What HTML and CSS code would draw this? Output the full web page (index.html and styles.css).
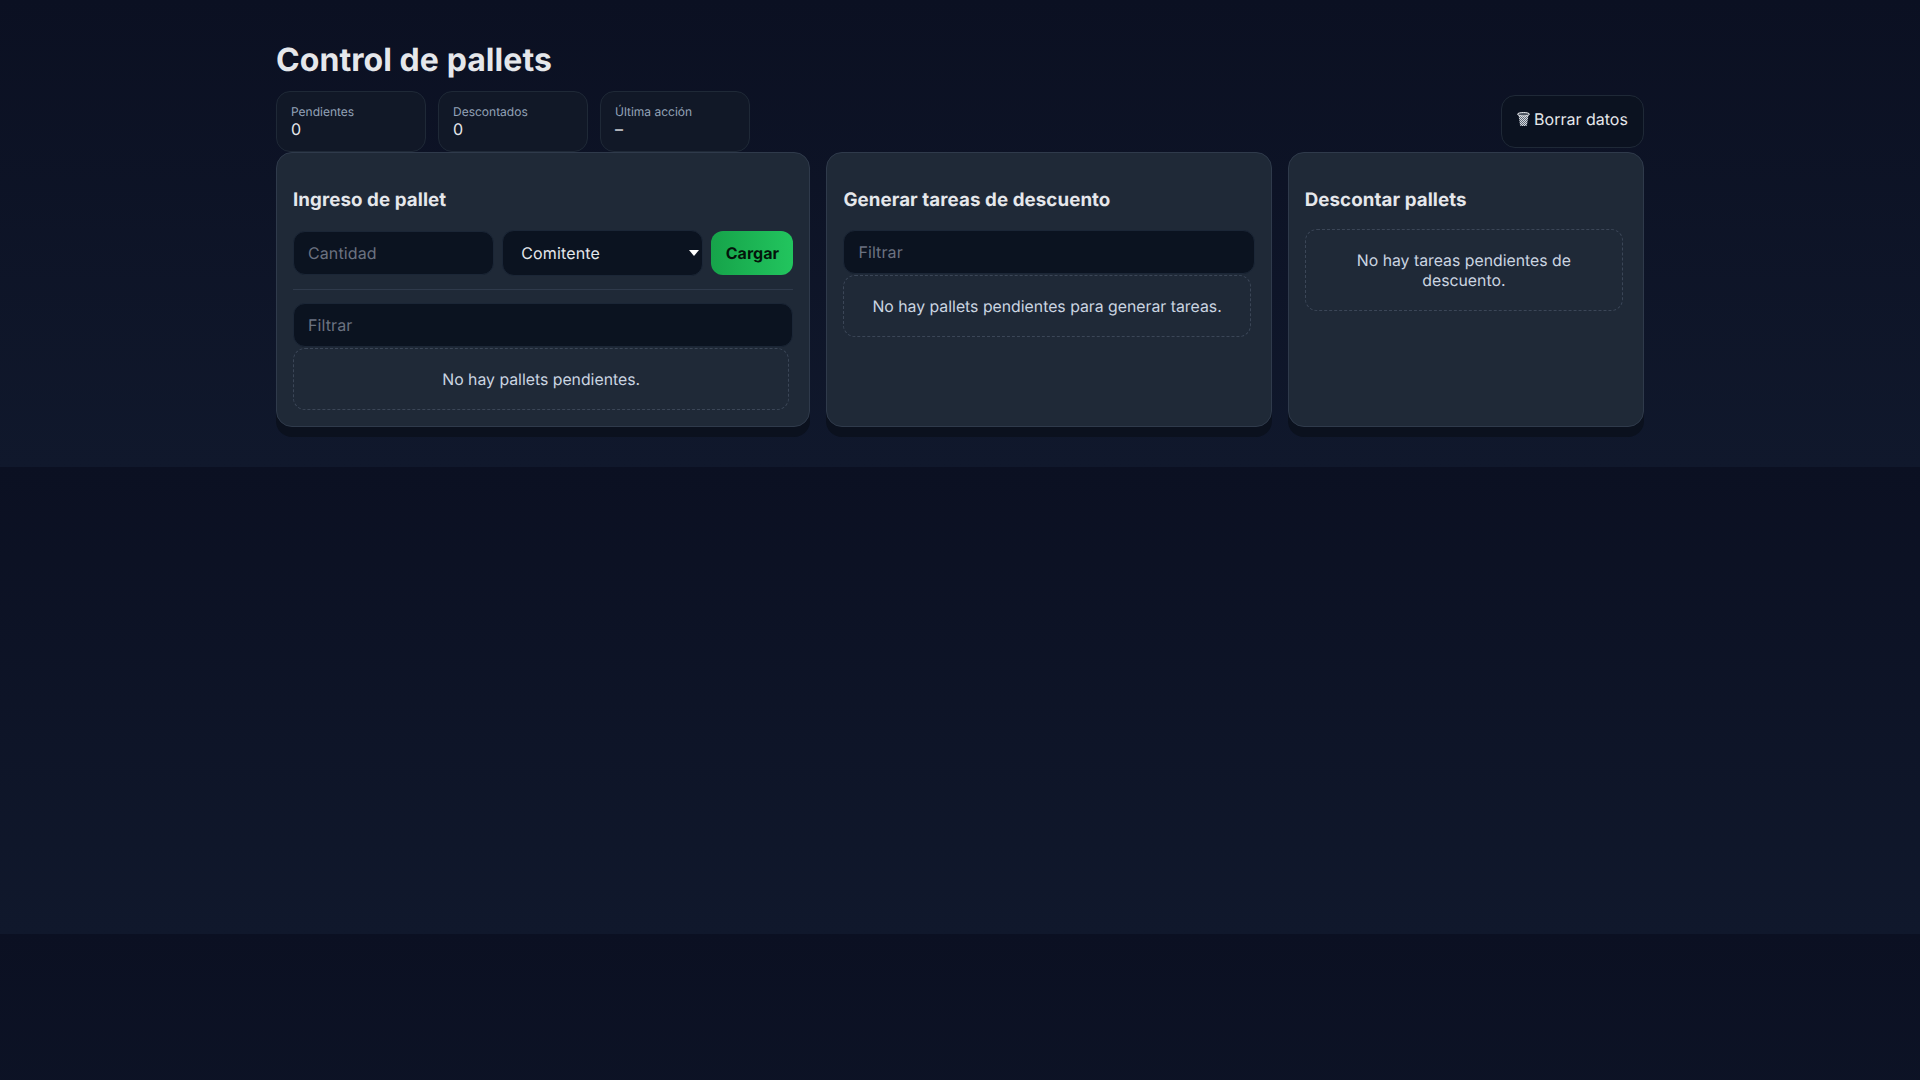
FILE: index.html
```html
<!DOCTYPE html>
<html lang="es"><head>
<meta charset="utf-8">
<title>Control de pallets</title>
<link rel="stylesheet" href="styles.css">
</head>
<body>
  <div class="container">
    <h1>Control de pallets</h1>

    <div class="topbar">
      <div class="stats">
        <div class="stat">
          <div class="stat-label">Pendientes</div>
          <div class="stat-value">0</div>
        </div>
        <div class="stat">
          <div class="stat-label">Descontados</div>
          <div class="stat-value">0</div>
        </div>
        <div class="stat">
          <div class="stat-label">Última acción</div>
          <div class="stat-value">–</div>
        </div>
      </div>
      <button class="btn-clear">
        <svg class="icon-trash" width="13" height="14" viewBox="0 0 13 14">
          <defs>
            <pattern id="mesh" width="2" height="2" patternUnits="userSpaceOnUse">
              <rect width="2" height="2" fill="#5d6673"></rect>
              <rect width="1" height="1" fill="#d5d9df"></rect>
              <rect x="1" y="1" width="1" height="1" fill="#d5d9df"></rect>
            </pattern>
          </defs>
          <path d="M1.6 3.5 L3 13 Q3.1 14 4 14 H9 Q9.9 14 10 13 L11.4 3.5 Z" fill="url(#mesh)"></path>
          <ellipse cx="6.5" cy="2.2" rx="6" ry="1.7" fill="#4a525e" stroke="#e8eaed" stroke-width="1"></ellipse>
        </svg>
        Borrar datos
      </button>
    </div>

    <div class="columns">
      <section class="card">
        <h2 class="title-form">Ingreso de pallet</h2>
        <div class="form-row">
          <input class="field" type="number" placeholder="Cantidad">
          <select class="field field-select">
            <option>Comitente</option>
          </select>
          <button class="btn-load">Cargar</button>
        </div>
        <hr class="divider">
        <input class="field field-filter" type="text" placeholder="Filtrar">
        <div class="list">
          <div class="empty">No hay pallets pendientes.</div>
        </div>
      </section>

      <section class="card">
        <h2 class="title-form">Generar tareas de descuento</h2>
        <input class="field field-filter" type="text" placeholder="Filtrar">
        <div class="list">
          <div class="empty">No hay pallets pendientes para generar tareas.</div>
        </div>
      </section>

      <section class="card">
        <h2>Descontar pallets</h2>
        <div class="list">
          <div class="empty">No hay tareas pendientes de descuento.</div>
        </div>
      </section>
    </div>
  </div>
</body></html>
```

FILE: styles.css
```css
:root {
  --text: #e5e7eb;
  --muted: #94a3b8;
  --card: #1f2937;
  --line: #2f3a4b;
  --input: #0b1320;
}

* {
  box-sizing: border-box;
}

html {
  background: linear-gradient(180deg, #0b1022, #10182c);
}

body {
  margin: 0;
  color: var(--text);
  font-family: Inter, "Liberation Sans", sans-serif;
  font-size: 16px;
  text-rendering: geometricPrecision;
}

.container {
  max-width: 1400px;
  margin: 0 auto;
  padding: 40px 16px;
}

h1 {
  margin: 0 0 12px;
  font-size: 32px;
  line-height: 39px;
  font-weight: 700;
  letter-spacing: 0.07px;
}

.topbar {
  display: flex;
  justify-content: space-between;
  align-items: center;
  height: 61px;
}

.stats {
  display: flex;
  gap: 12px;
}

.stat {
  width: 150px;
  height: 61px;
  padding: 12px 14px;
  background: #111827;
  border: 1px solid #1f2937;
  border-radius: 14px;
}

.stat-label {
  font-size: 12px;
  line-height: 15px;
  color: var(--muted);
}

.stat-value {
  line-height: 20px;
}

.btn-clear {
  display: flex;
  align-items: center;
  justify-content: center;
  gap: 4px;
  width: 143px;
  height: 53px;
  padding: 0 0 6px;
  background: #0b1220;
  color: var(--text);
  border: 1px solid #1f2937;
  border-radius: 14px;
  font: inherit;
  text-rendering: inherit;
}

.columns {
  display: grid;
  grid-template-columns: minmax(0, 1.5fr) minmax(0, 1.25fr) minmax(0, 1fr);
  gap: 16px;
}

.card {
  padding: 16px;
  background: var(--card);
  border: 1px solid var(--line);
  border-radius: 16px;
  box-shadow: 0 10px 0 #0b111e;
}

h2 {
  margin: 18.72px 0;
  font-size: 18.72px;
  line-height: 23px;
  font-weight: 700;
  letter-spacing: 0.09px;
}

.title-form {
  margin-bottom: 19.4px;
}

.form-row {
  display: flex;
  align-items: center;
  gap: 8.2px;
}

.field {
  height: 44px;
  padding: 0 14px;
  background: var(--input);
  color: var(--text);
  border: 1px solid #1b2636;
  border-radius: 12px;
  font: inherit;
  text-rendering: inherit;
}

.field::placeholder {
  color: #6b7280;
  letter-spacing: 0.1px;
}

.form-row .field {
  flex: none;
  width: 201px;
}

.field-select {
  height: 46px;
  padding-left: 18px;
  letter-spacing: 0.15px;
  appearance: none;
  background-image: url("data:image/svg+xml,%3Csvg xmlns='http://www.w3.org/2000/svg' width='10' height='6'%3E%3Cpath d='M0 0H10L5 6Z' fill='%23fff'/%3E%3C/svg%3E");
  background-repeat: no-repeat;
  background-position: right 3px center;
}

.btn-load {
  width: 82px;
  height: 44px;
  padding: 0;
  background: linear-gradient(90deg, #16a34a, #22c55e);
  color: #04130a;
  border: 0;
  border-radius: 12px;
  font: inherit;
  font-weight: 700;
  text-rendering: inherit;
}

.divider {
  margin: 12.4px 0 13px;
  border: 0;
  border-top: 1px solid var(--line);
}

.field-filter {
  display: block;
  width: 100%;
  margin-bottom: 1px;
}

.list {
  padding-right: 4px;
}

.empty {
  padding: 21px 16px 19px;
  text-align: center;
  font-size: 15.8px;
  line-height: 20px;
  color: #cbd5e1;
  border: 1px dashed #3b4657;
  border-radius: 12px;
}
```
